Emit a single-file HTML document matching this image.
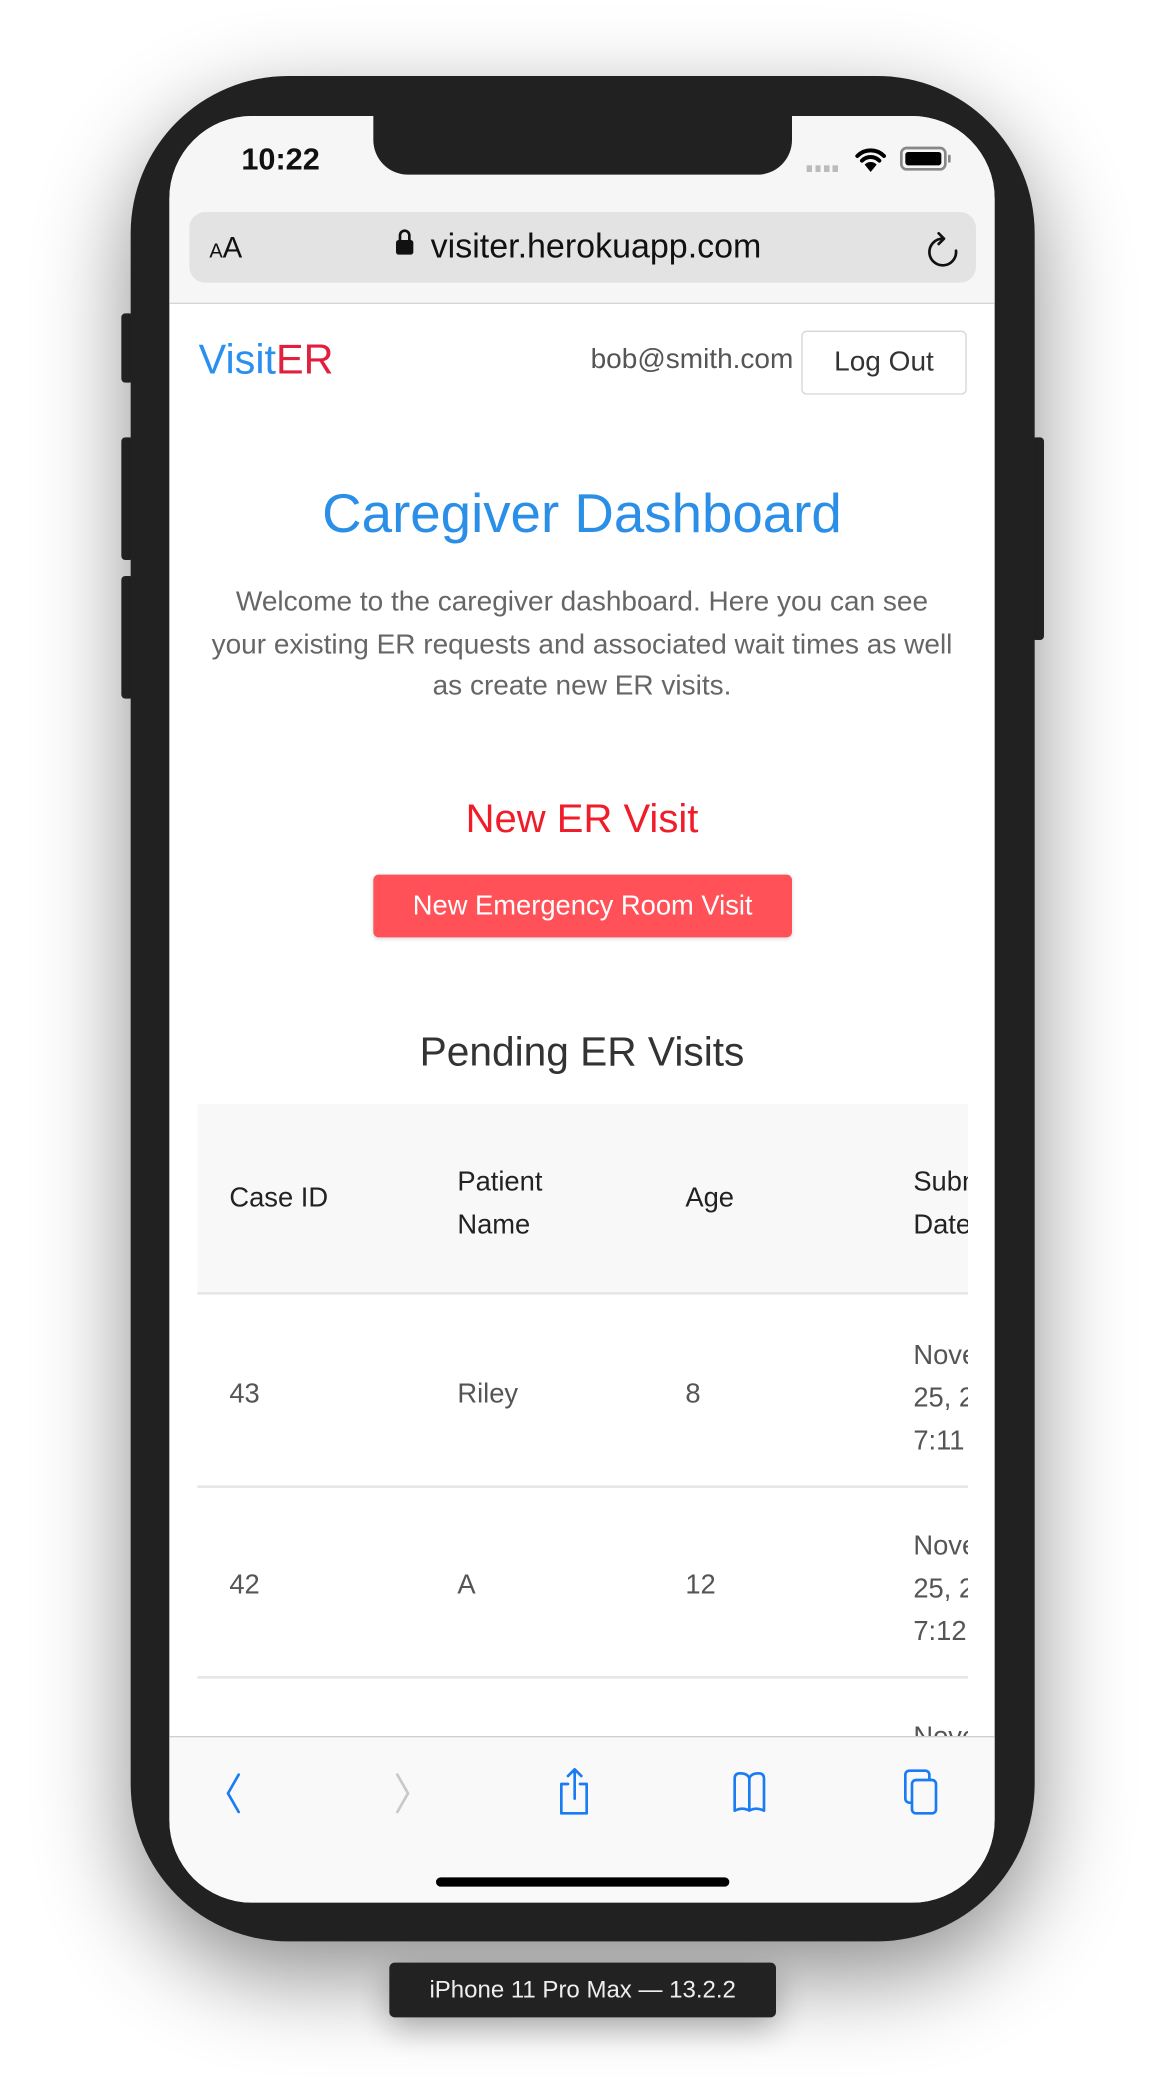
<!DOCTYPE html>
<html><head><meta charset="utf-8"><style>
*{margin:0;padding:0;box-sizing:border-box}
html,body{width:1168px;height:2096px;background:#fff;overflow:hidden;font-family:"Liberation Sans",sans-serif}
#w{position:absolute;left:0;top:0;width:876px;height:1572px;transform:scale(1.33333);transform-origin:0 0}
.a{position:absolute}
.phone{left:98px;top:57px;width:678px;height:1399px;border-radius:118px;background:#212121;box-shadow:0 25px 70px rgba(0,0,0,.45)}
.btn{background:#2a2a2a;border-radius:3px}
.screen{left:127px;top:87px;width:619px;height:1340px;border-radius:62px;background:#fff;overflow:hidden}
.t{white-space:nowrap}
</style></head><body><div id="w">
<div class="a btn" style="left:91px;top:235px;width:9px;height:52px"></div>
<div class="a btn" style="left:91px;top:328px;width:9px;height:92px"></div>
<div class="a btn" style="left:91px;top:432px;width:9px;height:92px"></div>
<div class="a btn" style="left:774px;top:328px;width:9px;height:152px"></div>
<div class="a phone"></div>
<div class="a screen">
  <div class="a" style="left:0;top:0;width:619px;height:141px;background:#f5f6f5;border-bottom:1px solid #d5d5d5"></div>
  <div class="a" style="left:153px;top:-2px;width:314px;height:46px;background:#212121;border-radius:0 0 26px 26px"></div>
  <div class="a t" style="left:54px;top:19px;font-size:23px;font-weight:bold;color:#111">10:22</div>
  <div class="a" style="left:478px;top:37px;width:24px;height:5px;background:repeating-linear-gradient(90deg,#bbb 0 4px,transparent 4px 6.5px)"></div>
  <svg class="a" style="left:514px;top:23px" width="24" height="20" viewBox="0 0 24 20"><path d="M2 7a14 14 0 0 1 20 0M5.5 10.5a9 9 0 0 1 13 0" stroke="#000" stroke-width="3" fill="none" stroke-linecap="round"/><path d="M7.5 13.5a6 6 0 0 1 9 0L12 19z" fill="#000"/></svg>
  <div class="a" style="left:548px;top:23px;width:35px;height:18px;border:2px solid #888;border-radius:5px;padding:2px"><div style="width:100%;height:100%;background:#000;border-radius:2px"></div></div>
  <div class="a" style="left:584px;top:29px;width:2px;height:6px;background:#888;border-radius:1px"></div>
  <div class="a" style="left:15px;top:72px;width:590px;height:53px;background:#e2e3e2;border-radius:12px"></div>
  <div class="a t" style="left:30px;top:86px;color:#111"><span style="font-size:15px">A</span><span style="font-size:22px">A</span></div>
  <div class="a" style="left:170px;top:93px;width:13px;height:11px;background:#111;border-radius:2px"></div>
  <div class="a" style="left:172px;top:85px;width:9px;height:11px;border:2px solid #111;border-radius:5px 5px 0 0"></div>
  <div class="a t" style="left:196px;top:84px;font-size:25.5px;color:#111">visiter.herokuapp.com</div>
  <svg class="a" style="left:565px;top:84px" width="30" height="32" viewBox="0 0 30 32"><path d="M15 8A10 10 0 1 0 25 17" stroke="#111" stroke-width="2" fill="none" stroke-linecap="round"/><path d="M12 4l4 4-4 4" stroke="#111" stroke-width="2" fill="none" stroke-linecap="round" stroke-linejoin="round"/></svg>

  <div class="a t" style="left:22px;top:165px;font-size:31px"><span style="color:#2a8ff0">Visit</span><span style="color:#e0203f">ER</span></div>
  <div class="a t" style="right:151px;top:171px;font-size:21px;color:#555">bob@smith.com</div>
  <div class="a" style="left:474px;top:161px;width:124px;height:48px;border:1px solid #d5d5d5;border-radius:4px;font-size:21px;color:#333;text-align:center;line-height:46px">Log Out</div>

  <div class="a t" style="left:0;width:619px;top:275px;text-align:center;font-size:41px;color:#2b8fe8">Caregiver Dashboard</div>
  <div class="a t" style="left:0;width:619px;top:349px;text-align:center;font-size:21px;line-height:31.5px;color:#666">Welcome to the caregiver dashboard. Here you can see<br>your existing ER requests and associated wait times as well<br>as create new ER visits.</div>
  <div class="a t" style="left:0;width:619px;top:511px;text-align:center;font-size:30px;color:#f01c2a">New ER Visit</div>
  <div class="a t" style="left:153px;top:569px;width:314px;height:47px;background:#ff5157;border-radius:4px;color:#fff;font-size:20.5px;text-align:center;line-height:47px;box-shadow:0 1px 3px rgba(0,0,0,.15)">New Emergency Room Visit</div>
  <div class="a t" style="left:0;width:619px;top:685px;text-align:center;font-size:30.5px;color:#333">Pending ER Visits</div>

  <div class="a" style="left:21px;top:741px;width:578px;height:640px;overflow:hidden">
    <div class="a" style="left:0;top:0;width:700px;height:143px;background:#f8f8f8;border-bottom:2px solid #e6e6e6"></div>
    <div class="a t" style="left:24px;top:59px;font-size:20.5px;color:#222">Case ID</div>
    <div class="a t" style="left:195px;top:43px;font-size:20.5px;line-height:32px;color:#222">Patient<br>Name</div>
    <div class="a t" style="left:366px;top:59px;font-size:20.5px;color:#222">Age</div>
    <div class="a t" style="left:537px;top:43px;font-size:20.5px;line-height:32px;color:#222">Submitted<br>Date</div>

    <div class="a" style="left:0;top:286px;width:700px;height:2px;background:#e6e6e6"></div>
    <div class="a t" style="left:24px;top:206px;font-size:20.5px;color:#555">43</div>
    <div class="a t" style="left:195px;top:206px;font-size:20.5px;color:#555">Riley</div>
    <div class="a t" style="left:366px;top:206px;font-size:20.5px;color:#555">8</div>
    <div class="a t" style="left:537px;top:173px;font-size:20.5px;line-height:32px;color:#555">November<br>25, 2019<br>7:11 PM</div>

    <div class="a" style="left:0;top:429px;width:700px;height:2px;background:#e6e6e6"></div>
    <div class="a t" style="left:24px;top:349px;font-size:20.5px;color:#555">42</div>
    <div class="a t" style="left:195px;top:349px;font-size:20.5px;color:#555">A</div>
    <div class="a t" style="left:366px;top:349px;font-size:20.5px;color:#555">12</div>
    <div class="a t" style="left:537px;top:316px;font-size:20.5px;line-height:32px;color:#555">November<br>25, 2019<br>7:12 PM</div>
    <div class="a t" style="left:537px;top:459px;font-size:20.5px;line-height:32px;color:#555">November</div>
  </div>

  <div class="a" style="left:0;top:1215px;width:619px;height:125px;background:#f9f9f9;border-top:1px solid #cfcfcf"></div>
  <svg class="a" style="left:30px;top:1238px" width="560" height="42" viewBox="0 0 560 42">
    <path d="M22 6L14 20l8 14" stroke="#1a7cf5" stroke-width="2" fill="none" stroke-linecap="round"/>
    <path d="M141 6l8 14-8 14" stroke="#c8c8c8" stroke-width="2" fill="none" stroke-linecap="round"/>
    <path d="M269 13h-5v22h19v-22h-5M274 2v22M269 7l5-5 5 5" stroke="#1a7cf5" stroke-width="2" fill="none" stroke-linecap="round" stroke-linejoin="round"/>
    <path d="M394 33V9q0-4 4-4q6 0 7 4q1-4 7-4q4 0 4 4v24q-6-3-11 0q-5-3-11 0zM405 9v24" stroke="#1a7cf5" stroke-width="2" fill="none" stroke-linejoin="round"/>
    <rect x="522" y="3" width="18" height="24" rx="3" stroke="#1a7cf5" stroke-width="2" fill="none"/>
    <rect x="527" y="10" width="18" height="25" rx="3" stroke="#1a7cf5" stroke-width="2" fill="#f9f9f9"/>
  </svg>
  <div class="a" style="left:200px;top:1321px;width:220px;height:7px;background:#000;border-radius:4px"></div>
</div>
<div class="a t" style="left:292px;top:1472px;width:290px;height:41px;background:#222;border-radius:4px;color:#eee;font-size:18px;text-align:center;line-height:41px;box-shadow:0 8px 25px rgba(0,0,0,.3)">iPhone 11 Pro Max — 13.2.2</div>
</div></body></html>
